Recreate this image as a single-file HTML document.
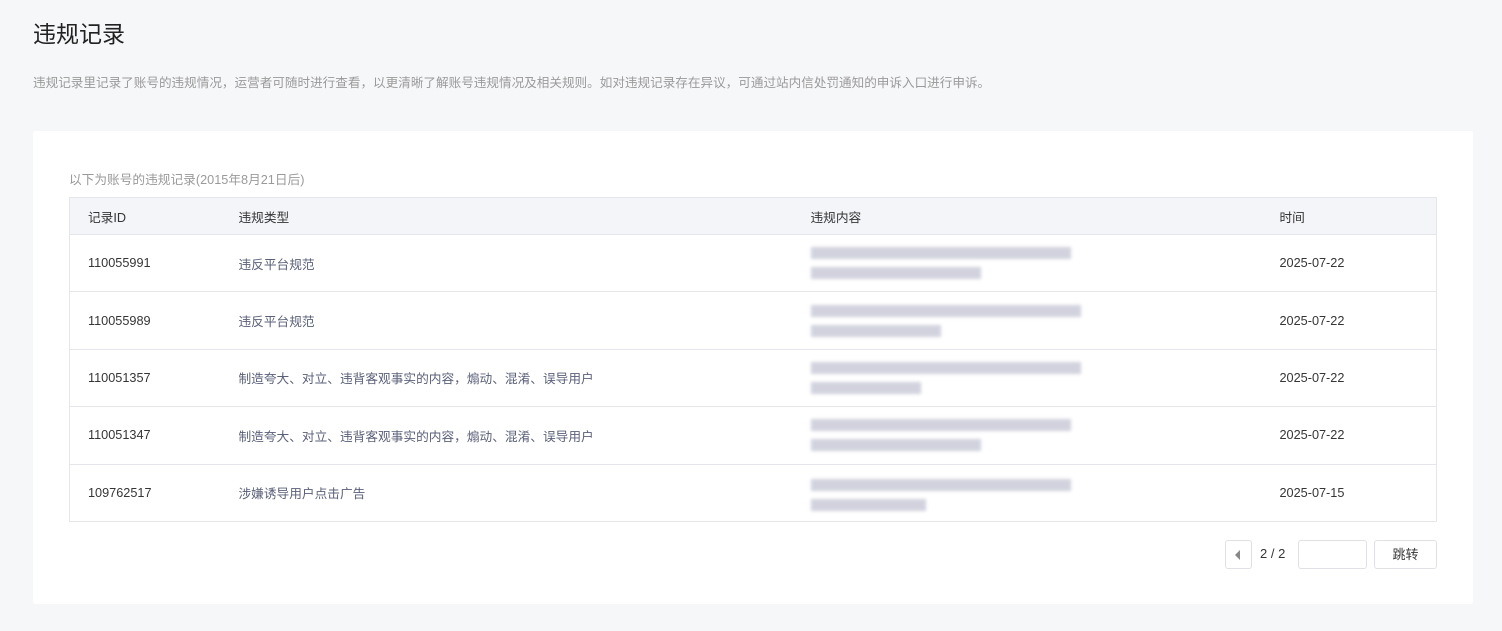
<!DOCTYPE html>
<html><head><meta charset="utf-8"><style>
*{margin:0;padding:0;box-sizing:border-box}
body{width:1502px;height:631px;background:#f6f7f9;font-family:"Liberation Sans","Noto Sans CJK SC",sans-serif;color:#353535;position:relative;overflow:hidden}
h1{position:absolute;left:33px;top:15px;font-size:23px;font-weight:normal;color:#222}
.desc{position:absolute;left:33px;top:72px;font-size:12.6px;color:#9a9a9a}
.card{position:absolute;left:33px;top:131px;width:1440px;height:473px;background:#fff;border-radius:2px}
.cap{position:absolute;left:36px;top:38px;font-size:12.7px;color:#9a9a9a}
table{position:absolute;left:36px;top:66px;width:1368px;border-collapse:collapse;font-size:12.7px;border:1px solid #e4e6eb}
th{background:#f4f5f9;font-weight:normal;text-align:left;height:37px;padding-left:18px;color:#353535;border-bottom:1px solid #e4e6eb}
td{height:57.4px;padding-left:18px;border-bottom:1px solid #e4e6eb;color:#353535}
td.t{color:#5a6078}
.b{position:relative;height:40px}
.b i{position:absolute;left:0;height:12px;background:#c9cbd8;filter:blur(1.5px);opacity:.85}
.pg{position:absolute;top:409px;font-size:13px}
.btn{position:absolute;border:1px solid #e0e1e6;border-radius:3px;background:#fff;height:29px}
</style></head><body>
<h1>违规记录</h1>
<div class="desc">违规记录里记录了账号的违规情况，运营者可随时进行查看，以更清晰了解账号违规情况及相关规则。如对违规记录存在异议，可通过站内信处罚通知的申诉入口进行申诉。</div>
<div class="card">
<div class="cap">以下为账号的违规记录(2015年8月21日后)</div>
<table>
<tr><th style="width:151px">记录ID</th><th style="width:572px">违规类型</th><th style="width:469px">违规内容</th><th>时间</th></tr>
<tr><td>110055991</td><td class="t">违反平台规范</td><td><div class="b"><i style="top:4px;width:260px"></i><i style="top:24px;width:170px"></i></div></td><td>2025-07-22</td></tr>
<tr><td>110055989</td><td class="t">违反平台规范</td><td><div class="b"><i style="top:4px;width:270px"></i><i style="top:24px;width:130px"></i></div></td><td>2025-07-22</td></tr>
<tr><td>110051357</td><td class="t">制造夸大、对立、违背客观事实的内容，煽动、混淆、误导用户</td><td><div class="b"><i style="top:4px;width:270px"></i><i style="top:24px;width:110px"></i></div></td><td>2025-07-22</td></tr>
<tr><td>110051347</td><td class="t">制造夸大、对立、违背客观事实的内容，煽动、混淆、误导用户</td><td><div class="b"><i style="top:4px;width:260px"></i><i style="top:24px;width:170px"></i></div></td><td>2025-07-22</td></tr>
<tr><td>109762517</td><td class="t">涉嫌诱导用户点击广告</td><td><div class="b"><i style="top:6px;width:260px"></i><i style="top:26px;width:115px"></i></div></td><td>2025-07-15</td></tr>
</table>
<div class="btn" style="left:1192px;top:409px;width:27px"><span style="position:absolute;left:9px;top:9px;width:0;height:0;border-top:5px solid transparent;border-bottom:5px solid transparent;border-right:5px solid #888"></span></div>
<div class="pg" style="left:1227px;top:415px;color:#353535">2 / 2</div>
<div class="btn" style="left:1265px;top:409px;width:69px"></div>
<div class="btn" style="left:1341px;top:409px;width:63px;font-size:13px;text-align:center;line-height:27px">跳转</div>
</div>
</body></html>
